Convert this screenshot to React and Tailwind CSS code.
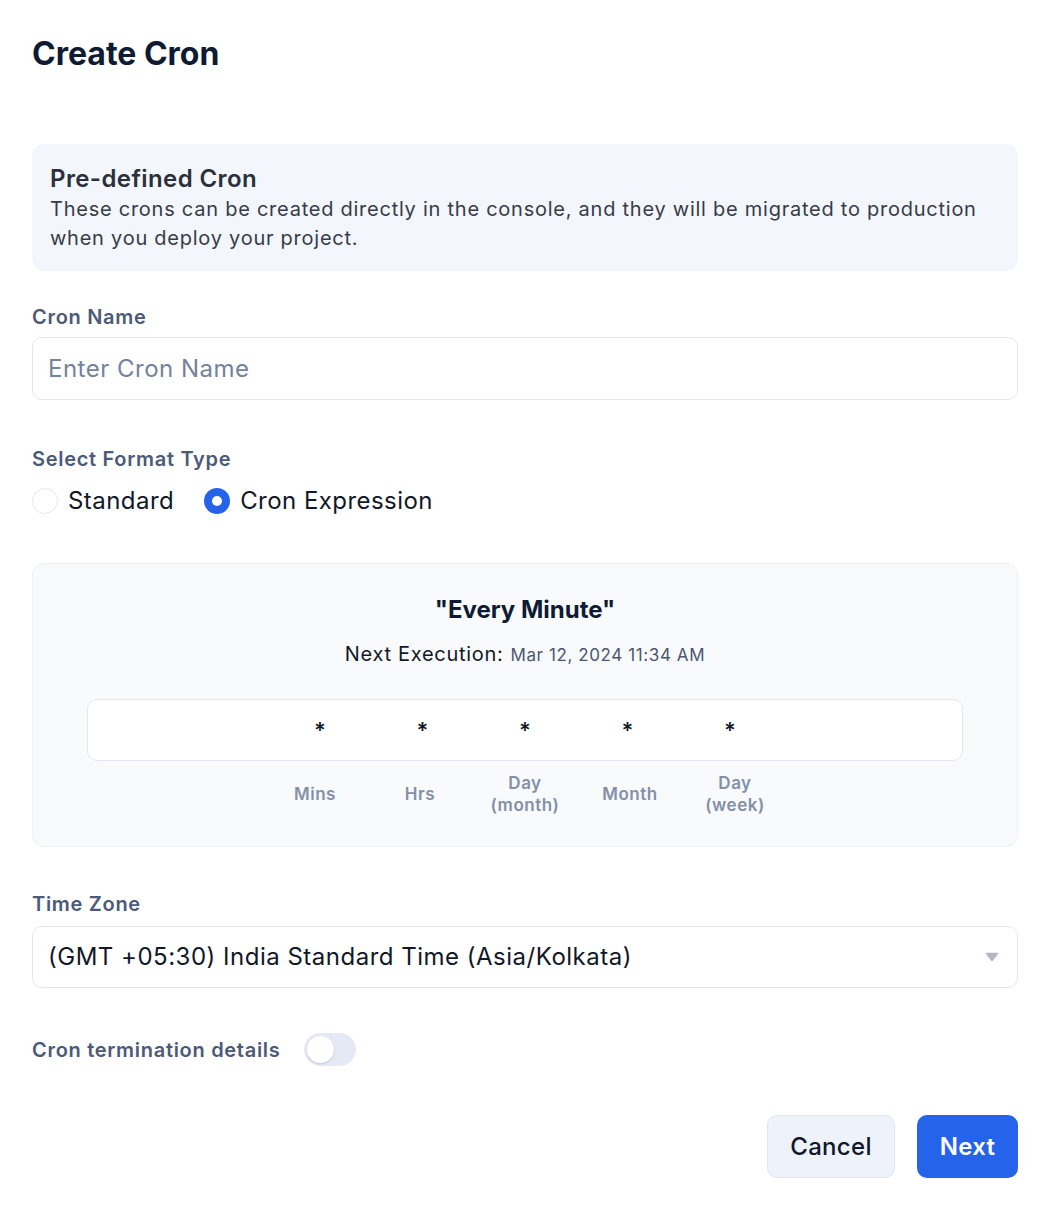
import React, { useState } from 'react';

const font = { fontFamily: 'Inter, "Noto Sans", sans-serif' };

const fields = [
  { value: '*', label: ['Mins'] },
  { value: '*', label: ['Hrs'] },
  { value: '*', label: ['Day', '(month)'] },
  { value: '*', label: ['Month'] },
  { value: '*', label: ['Day', '(week)'] },
];

const Radio = ({ checked, label, onClick }) => (
  <button type="button" onClick={onClick} className="flex items-center gap-[10px]">
    {checked ? (
      <span className="w-[26px] h-[26px] rounded-full bg-[#2563eb] flex items-center justify-center">
        <span className="w-[10px] h-[10px] rounded-full bg-white" />
      </span>
    ) : (
      <span className="w-[26px] h-[26px] rounded-full border border-[#e3e6ec] bg-white" />
    )}
    <span className="text-[24px] tracking-[0.45px] text-[#111827]">{label}</span>
  </button>
);

const App = () => {
  const [format, setFormat] = useState('cron');
  const [terminate, setTerminate] = useState(false);

  return (
    <div className="bg-white min-h-[1216px] pl-8 pr-6 pt-[30px]" style={font}>
      <h1 className="text-[32px] font-bold text-[#0f1b33] leading-[48px]">Create Cron</h1>

      <div className="mt-[66px] bg-[#f3f6fd] rounded-[12px] px-[18px] pt-[19px] pb-[18px]">
        <h2 className="text-[24px] font-semibold tracking-[0.4px] text-[#2b303b] leading-[32px]">Pre-defined Cron</h2>
        <p className="text-[20px] tracking-[0.75px] text-[#373c47] leading-[29px] pr-[20px]">
          These crons can be created directly in the console, and they will be migrated to production
          when you deploy your project.
        </p>
      </div>

      <label className="block mt-[32px] text-[20px] font-semibold tracking-[0.7px] text-[#4b5a78] leading-[28px]">Cron Name</label>
      <input
        placeholder="Enter Cron Name"
        className="mt-[6px] w-full h-[63px] rounded-[10px] border border-[#e3e6ec] px-[15px] text-[24px] tracking-[0.5px] text-[#111827] placeholder:text-[#73839b] outline-none"
      />

      <label className="block mt-[45px] text-[20px] font-semibold tracking-[0.7px] text-[#4b5a78] leading-[28px]">Select Format Type</label>
      <div className="mt-[10px] flex items-center gap-[30px]">
        <Radio checked={format === 'standard'} label="Standard" onClick={() => setFormat('standard')} />
        <Radio checked={format === 'cron'} label="Cron Expression" onClick={() => setFormat('cron')} />
      </div>

      <div className="mt-[44px] bg-[#f8fafc] border border-[#eef0f4] rounded-[12px] px-[54px] pt-[29px] pb-[30px]">
        <div className="text-center text-[24px] font-bold text-[#0f1b33] leading-[34px]">"Every Minute"</div>
        <div className="mt-[12px] flex items-baseline justify-center gap-[7px]">
          <span className="text-[20px] tracking-[0.7px] text-[#111827]">Next Execution:</span>
          <span className="text-[17px] tracking-[0.6px] text-[#4b5670]">Mar 12, 2024 11:34 AM</span>
        </div>
        <div className="mt-[30px] h-[62px] bg-white border border-[#e3e6ec] rounded-[10px] flex items-center justify-center">
          {fields.map((f, i) => (
            <span key={i} className="w-[102.5px] text-center text-[22px] font-semibold text-[#111827] leading-none">
              {f.value}
            </span>
          ))}
        </div>
        <div className="mt-[11px] flex justify-center items-center">
          {fields.map((f, i) => (
            <div key={i} className="w-[105px] text-center text-[17px] font-semibold tracking-[0.5px] text-[#8390a8] leading-[22px]">
              {f.label.map((l) => (
                <div key={l}>{l}</div>
              ))}
            </div>
          ))}
        </div>
      </div>

      <label className="block mt-[43px] text-[20px] font-semibold tracking-[0.7px] text-[#4b5a78] leading-[28px]">Time Zone</label>
      <div className="mt-[8px] h-[62px] rounded-[10px] border border-[#e3e6ec] pl-[15px] pr-[18px] flex items-center justify-between">
        <span className="text-[24px] tracking-[0.5px] text-[#111827]">(GMT +05:30) India Standard Time (Asia/Kolkata)</span>
        <svg width="14" height="10" viewBox="0 0 14 10">
          <path d="M1.5 1.5 L12.5 1.5 L7 8.5 Z" fill="#b4b8c4" stroke="#b4b8c4" strokeWidth="1.5" strokeLinejoin="round" />
        </svg>
      </div>

      <div className="mt-[45px] flex items-center gap-[24px]">
        <span className="text-[20px] font-semibold tracking-[0.7px] text-[#4b5a78]">Cron termination details</span>
        <button
          type="button"
          onClick={() => setTerminate(!terminate)}
          className={`w-[52px] h-[33px] rounded-full p-[3px] flex ${terminate ? 'bg-[#2563eb] justify-end' : 'bg-[#e5e9f5] justify-start'}`}
        >
          <span className="w-[27px] h-[27px] rounded-full bg-white shadow-[0_1px_2px_rgba(0,0,0,0.15)]" />
        </button>
      </div>

      <div className="mt-[49px] flex justify-end gap-[22px]">
        <button type="button" className="w-[128px] h-[63px] rounded-[10px] bg-[#eef2fb] border border-[#dfe4ee] text-[24px] font-medium tracking-[0.3px] text-[#111827]">
          Cancel
        </button>
        <button type="button" className="w-[101px] h-[63px] rounded-[10px] bg-[#2563eb] text-[24px] font-semibold tracking-[0.3px] text-white">
          Next
        </button>
      </div>
    </div>
  );
};

export default App;
